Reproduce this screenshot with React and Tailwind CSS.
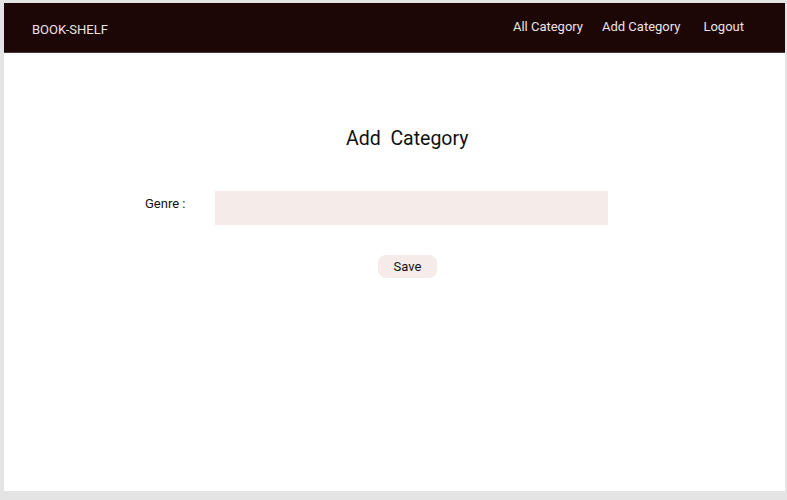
export default function App() {
  return (
    <div className="h-[500px] w-[787px] bg-[#e4e4e4] pl-[4px] pt-[3px] pr-[2px] pb-[9px] font-['Roboto',sans-serif]">
      <div className="flex h-full flex-col bg-white">
        <nav className="flex h-[50px] items-center justify-between border-b border-[#4a3a3a] bg-[#1c0606] pl-[28px] pr-[41px] text-[13px] text-[#ece4e4]">
          <span className="pt-[4px]">BOOK-SHELF</span>
          <div className="flex gap-[19px] pb-[2px]">
            <a href="#" className="">All Category</a>
            <a href="#" className="">Add Category</a>
            <a href="#" className="ml-[4px]">Logout</a>
          </div>
        </nav>

        <main className="flex flex-col">
          <h2 className="mt-[72px] pl-[342px] text-[19.5px] leading-[28px] text-[#111]">
            Add&nbsp;&nbsp;Category
          </h2>

          <form className="mt-[38px] flex flex-col">
            <div className="flex items-start pl-[141px]">
              <label className="w-[70px] pt-[5px] text-[13px] leading-[16px] text-[#111]">Genre :</label>
              <input type="text" className="h-[34px] w-[393px] bg-[#f5ecea] px-3 text-[13px] outline-none" />
            </div>
            <div className="mt-[29px] pl-[374px]">
              <button type="button" className="h-[23px] w-[59px] rounded-lg bg-[#f5ecea] text-[13px] text-[#111]">
                Save
              </button>
            </div>
          </form>
        </main>
      </div>
    </div>
  )
}
